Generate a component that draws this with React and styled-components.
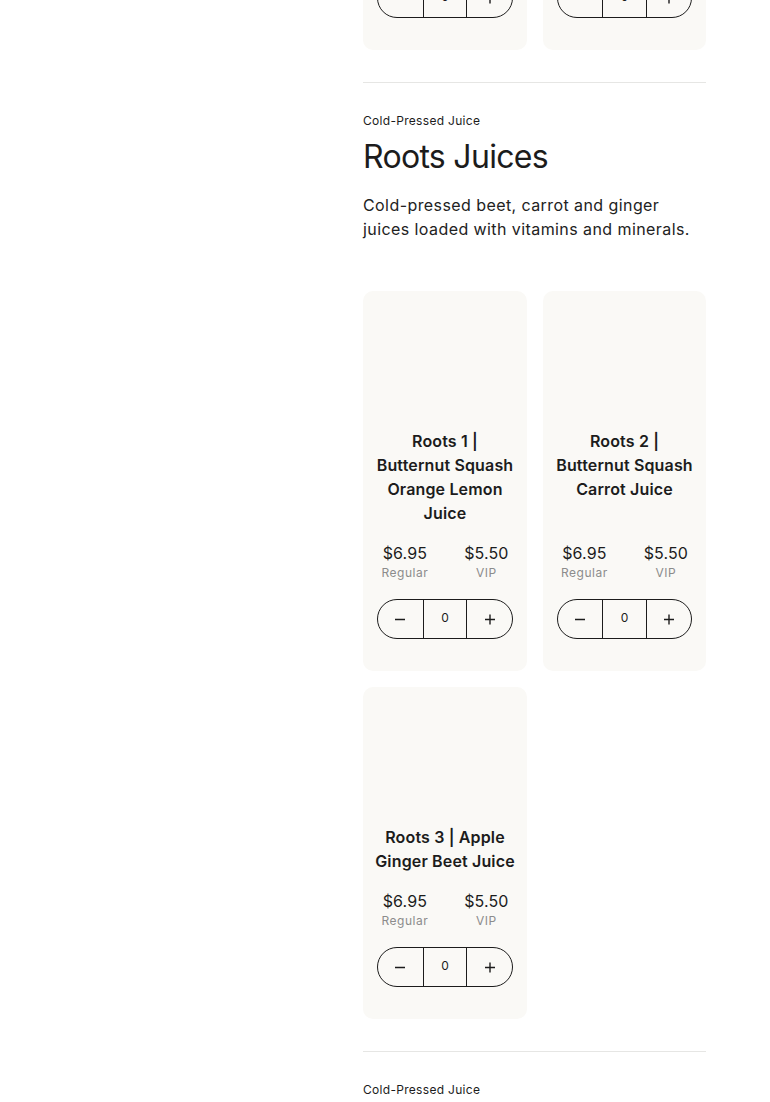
import React from "react";
import styled, { createGlobalStyle } from "styled-components";

const Global = createGlobalStyle`
  html, body { margin: 0; padding: 0; background: #ffffff; }
  body { font-family: Inter, "Noto Sans", sans-serif; color: #1c1c1c; overflow: hidden; }
  * { box-sizing: border-box; }
`;

const Page = styled.div`
  display: flex;
  justify-content: flex-start;
  padding-left: 363px;
  margin-top: -282px;
`;

const Column = styled.main`
  width: 343px;
  display: flex;
  flex-direction: column;
`;

const Section = styled.section`
  padding-bottom: 32px;
  border-bottom: ${(p) => (p.$divider ? "1px solid #e6e6e4" : "none")};
  padding-top: ${(p) => (p.$first ? "0" : "30px")};
`;

const Eyebrow = styled.div`
  font-size: 12px;
  line-height: 16px;
  letter-spacing: 0.3px;
  color: #1c1c1c;
`;

const Title = styled.h2`
  margin: 8px 0 0;
  font-size: 32px;
  line-height: 40px;
  font-weight: 400;
  letter-spacing: -0.7px;
`;

const Desc = styled.p`
  margin: 16px 0 50px;
  font-size: 16px;
  line-height: 24px;
  letter-spacing: 0.42px;
  color: #222;
`;

const Grid = styled.div`
  display: grid;
  grid-template-columns: 164px 163px;
  column-gap: 16px;
  row-gap: 16px;
`;

const Card = styled.article`
  background: #faf9f6;
  border-radius: 10px;
  padding: 14px 14px 32px;
  display: flex;
  flex-direction: column;
  align-items: stretch;
`;

const ImageSlot = styled.div`
  height: 110px;
  margin-bottom: 14px;
`;

const Name = styled.h3`
  margin: 0 -2px;
  font-size: 16px;
  line-height: 24px;
  font-weight: 600;
  letter-spacing: 0.15px;
  text-align: center;
`;

const Prices = styled.div`
  margin-top: auto;
  padding-top: 18px;
  display: flex;
  justify-content: center;
  gap: 36px;
`;

const Price = styled.div`
  display: flex;
  flex-direction: column;
  align-items: center;
`;

const Amount = styled.span`
  font-size: 16px;
  line-height: 20px;
  letter-spacing: 0.1px;
`;

const Tier = styled.span`
  margin-top: 2px;
  font-size: 12px;
  line-height: 16px;
  letter-spacing: 0.5px;
  color: #8c8c8c;
`;

const Stepper = styled.div`
  margin-top: 18px;
  height: 40px;
  border: 1px solid #1c1c1c;
  border-radius: 20px;
  display: grid;
  grid-template-columns: 1fr 1fr 1fr;
  overflow: hidden;
`;

const StepBtn = styled.button`
  border: none;
  background: transparent;
  padding: 0;
  display: flex;
  align-items: center;
  justify-content: center;
  color: #1c1c1c;
  cursor: pointer;
`;

const Count = styled.div`
  border-left: 1px solid #1c1c1c;
  border-right: 1px solid #1c1c1c;
  display: flex;
  align-items: center;
  justify-content: center;
  font-size: 12px;
  padding-bottom: 3px;
`;

const Minus = () => (
  <svg width="12" height="12" viewBox="0 0 12 12">
    <path d="M1 6.5h10" stroke="currentColor" strokeWidth="1.4" />
  </svg>
);
const Plus = () => (
  <svg width="12" height="12" viewBox="0 0 12 12">
    <path d="M1 6.5h10M6 1.5v10" stroke="currentColor" strokeWidth="1.4" />
  </svg>
);

const Product = ({ name }) => (
  <Card>
    <ImageSlot />
    <Name>{name}</Name>
    <Prices>
      <Price>
        <Amount>$6.95</Amount>
        <Tier>Regular</Tier>
      </Price>
      <Price>
        <Amount>$5.50</Amount>
        <Tier>VIP</Tier>
      </Price>
    </Prices>
    <Stepper>
      <StepBtn aria-label="decrease"><Minus /></StepBtn>
      <Count>0</Count>
      <StepBtn aria-label="increase"><Plus /></StepBtn>
    </Stepper>
  </Card>
);

export default function App() {
  return (
    <>
      <Global />
      <Page>
        <Column>
          <Section $first $divider>
            <Grid>
              <Product name="Greens 1 | Kale Juice" />
              <Product name="Greens 2 | Celery Juice" />
            </Grid>
          </Section>
          <Section $divider>
            <Eyebrow>Cold-Pressed Juice</Eyebrow>
            <Title>Roots Juices</Title>
            <Desc>Cold-pressed beet, carrot and ginger juices loaded with vitamins and minerals.</Desc>
            <Grid>
              <Product name="Roots 1 | Butternut Squash Orange Lemon Juice" />
              <Product name="Roots 2 | Butternut Squash Carrot Juice" />
              <Product name="Roots 3 | Apple Ginger Beet Juice" />
            </Grid>
          </Section>
          <Section>
            <Eyebrow>Cold-Pressed Juice</Eyebrow>
            <Title>Citrus Juices</Title>
          </Section>
        </Column>
      </Page>
    </>
  );
}
